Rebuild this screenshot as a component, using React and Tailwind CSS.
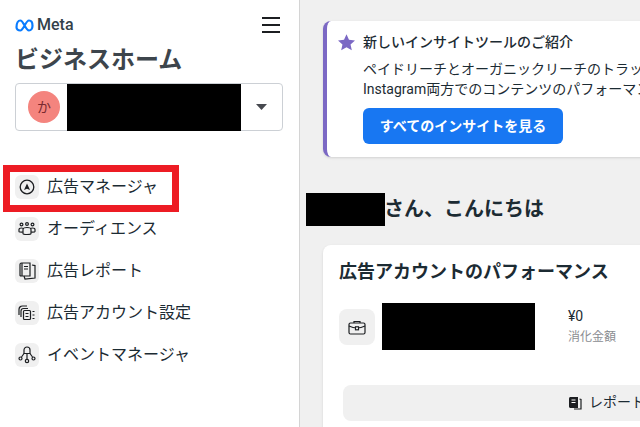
import React from 'react'

function MetaLogo() {
    return (
        <svg width="19" height="13" viewBox="0 0 19 13" fill="none">
            <path d="M1.500 8.300C1.500 4.300 3.200 1.500 5.300 1.500c3.200 0 5.200 10 8.700 10 2 0 3.500-2 3.500-4.800 0-3-1.400-5.200-3.500-5.200-3.400 0-5.400 10-8.800 10-2.100 0-3.700-1.200-3.700-3.200z" stroke="#0a7cff" strokeWidth="2.200" strokeLinejoin="round" />
        </svg>
    )
}

function AdsIcon() {
    return (
        <svg width="16" height="16" viewBox="0 0 16 16" fill="none" stroke="#1c1e21">
            <circle cx="8" cy="8" r="6.800" strokeWidth="1.300" />
            <path d="M8 4.500L11 11L8 9.800L5 11z" fill="#1c1e21" stroke="none" />
        </svg>
    )
}

function AudienceIcon() {
    return (
        <svg width="18" height="14" viewBox="0 0 18 14" fill="none" stroke="#1c1e21" strokeWidth="1.200">
            <circle cx="3.500" cy="2.500" r="1.400" />
            <circle cx="9" cy="2" r="1.400" />
            <circle cx="14.500" cy="2.500" r="1.400" />
            <path d="M1 9.500V7.500C1 6.600 2 6 3.500 6S6 6.600 6 7.500v2c0 .8-5 .8-5 0z" />
            <path d="M12 9.500v-2c0-.9 1-1.500 2.500-1.500s2.500.6 2.500 1.500v2c0 .8-5 .8-5 0z" />
            <path d="M5 11.500V7.500C5 6 7 5.500 9 5.500s4 .5 4 2v4c0 1.300-8 1.300-8 0z" fill="#f0f0f0" />
        </svg>
    )
}

function ReportIcon() {
    return (
        <svg width="17" height="18" viewBox="0 0 17 18" fill="none" stroke="#1c1e21" strokeWidth="1.200">
            <path d="M1 13.500V2.500C1 1.700 1.500 1 2.500 1H11v13H2.500C1.600 14 1 13.800 1 13.500z" />
            <path d="M3 1v13" />
            <path d="M5 4.500h4M5 7h4" />
            <path d="M13 3l3 .6V16L6 17l-1-3" />
        </svg>
    )
}

function SettingsIcon() {
    return (
        <svg width="18" height="16" viewBox="0 0 18 16" fill="none" stroke="#1c1e21" strokeWidth="1.200">
            <path d="M1 10V4.500C1 2.500 2.500 1 4.500 1H9" />
            <path d="M3 12V6c0-1.500 1-2.500 2.500-2.500H10" />
            <rect x="5.500" y="5.500" width="7" height="9" rx="1" />
            <path d="M7.500 8.500h3M7.500 11.500h3" />
            <path d="M14.500 6.500h2M14.500 10h2M14.500 13.500h2" />
        </svg>
    )
}

function EventIcon() {
    return (
        <svg width="18" height="18" viewBox="0 0 18 18" fill="none" stroke="#1c1e21" strokeWidth="1.200">
            <path d="M6 7.500V4a3 3 0 0 1 6 0v3.500z" />
            <path d="M6 7.500L3.500 11M12 7.500l2.500 3.500M9 7.500V13" />
            <circle cx="2.500" cy="12.500" r="1.500" />
            <circle cx="15.500" cy="12.500" r="1.500" />
            <circle cx="9" cy="15" r="1.700" />
        </svg>
    )
}

function MenuItem({ icon, label }) {
    return (
        <div className="flex items-center gap-2 h-6">
            <div className="w-6 h-6 rounded-md bg-[#f0f0f0] flex items-center justify-center">{icon}</div>
            <span className="text-[16px] text-[#1c2b33]">{label}</span>
        </div>
    )
}

export default function App() {
    return (
        <div className="flex w-[640px] h-[427px] overflow-hidden bg-[#f0f0f0] font-['Roboto','Noto_Sans_CJK_JP',sans-serif]">
            {/* sidebar */}
            <div className="relative w-[300px] shrink-0 bg-white border-r border-[#d4d4d4] px-[15px]">
                <div className="flex items-center justify-between h-[24px] mt-[13px] pr-[4px]">
                    <div className="flex items-center gap-[3px]">
                        <MetaLogo />
                        <span className="text-[16px] font-medium text-[#33414a]">Meta</span>
                    </div>
                    <div className="flex flex-col gap-[5px] w-[18px]">
                        <div className="h-[2px] bg-[#1c1e21]"></div>
                        <div className="h-[2px] bg-[#1c1e21]"></div>
                        <div className="h-[2px] bg-[#1c1e21]"></div>
                    </div>
                </div>
                <h1 className="text-[24px] leading-[34px] font-bold text-[#3d454c] mt-[6px]">ビジネスホーム</h1>
                <div className="flex items-center h-[48px] w-[268px] mt-[6px] border border-[#ccd0d5] rounded-[4px] pl-[12px]">
                    <div className="w-8 h-8 rounded-full bg-[#f4847e] flex items-center justify-center text-[14px] text-[#7a2a30]">か</div>
                    <div className="w-[174px] h-[47px] bg-black ml-[7px]"></div>
                    <svg className="ml-[15px]" width="11" height="6" viewBox="0 0 11 6">
                        <path d="M0 0H11L5.500 6z" fill="#47494f" />
                    </svg>
                </div>
                <div className="flex flex-col gap-[18px] mt-[44px]">
                    <MenuItem icon={<AdsIcon />} label="広告マネージャ" />
                    <MenuItem icon={<AudienceIcon />} label="オーディエンス" />
                    <MenuItem icon={<ReportIcon />} label="広告レポート" />
                    <MenuItem icon={<SettingsIcon />} label="広告アカウント設定" />
                    <MenuItem icon={<EventIcon />} label="イベントマネージャ" />
                </div>
                {/* red highlight around the first item */}
                <div className="absolute left-[3px] top-[165px] w-[176px] h-[47px] border-[7px] border-[#ed1c24]"></div>
            </div>

            {/* main */}
            <div className="flex-1 min-w-0 pl-[23px] pt-[21px]">
                <div className="w-[500px] h-[136px] bg-white rounded-lg border-l-4 border-[#7b68c4] shadow-sm pl-[11px] pt-[11px] flex gap-2">
                    <svg className="mt-[2px] shrink-0" width="17" height="17" viewBox="0 0 24 24">
                        <path d="M12 .5l3.500 7.700 8.500.9-6.300 5.700 1.800 8.300-7.500-4.300-7.500 4.300 1.800-8.300L0 9.100l8.500-.9z" fill="#7b68c4" />
                    </svg>
                    <div>
                        <div className="text-[14px] leading-[20px] font-medium text-[#1c2b33] whitespace-nowrap">新しいインサイトツールのご紹介</div>
                        <div className="text-[14px] leading-[20px] text-[#1c2b33] whitespace-nowrap mt-[7px]">ペイドリーチとオーガニックリーチのトラッキングが可能です。Facebookと</div>
                        <div className="text-[14px] leading-[20px] text-[#1c2b33] whitespace-nowrap">Instagram両方でのコンテンツのパフォーマンスを確認</div>
                        <div className="w-[200px] h-[36px] bg-[#1877f2] rounded-md flex items-center justify-center text-[14px] font-bold text-white mt-[9px]">すべてのインサイトを見る</div>
                    </div>
                </div>

                <div className="flex items-center h-[33px] mt-[36px] -ml-[17px]">
                    <div className="w-[79px] h-[33px] bg-black"></div>
                    <span className="text-[20px] font-bold text-[#1c2b33] whitespace-nowrap -ml-[1px] -mt-[1px]">さん、こんにちは</span>
                </div>

                <div className="w-[500px] h-[300px] bg-white rounded-lg shadow-sm mt-[19px] pl-[16px] pt-[14px]">
                    <div className="text-[18px] leading-[26px] font-bold text-[#1c2b33] whitespace-nowrap">広告アカウントのパフォーマンス</div>
                    <div className="flex mt-[18px]">
                        <div className="w-9 h-9 mt-[6px] rounded-lg bg-[#f0f0f0] flex items-center justify-center">
                            <svg width="18" height="15" viewBox="0 0 18 15" fill="none" stroke="#1c1e21" strokeWidth="1.200">
                                <rect x="1" y="3" width="16" height="11" rx="1.500" />
                                <path d="M1 6c5 2.500 11 2.500 16 0" />
                                <path d="M6 3V1.500h6V3" />
                                <rect x="7.500" y="6.800" width="3" height="3" fill="white" />
                            </svg>
                        </div>
                        <div className="w-[153px] h-[47px] bg-black ml-[7px]"></div>
                        <div className="ml-[33px] mt-[3px]">
                            <div className="text-[14px] leading-[20px] text-[#1c2b33]">¥0</div>
                            <div className="text-[12px] leading-[18px] mt-[2px] text-[#8a8d91] whitespace-nowrap">消化金額</div>
                        </div>
                    </div>
                    <div className="w-[450px] h-[36px] ml-[4px] mt-[35px] rounded-lg bg-[#f0f0f0] flex items-center pl-[225px] gap-[7px]">
                        <svg width="14" height="14" viewBox="0 0 14 14">
                            <path d="M1 2.500C1 1.700 1.700 1 2.500 1H10v11H2.500C1.700 12 1 11.300 1 10.500z" fill="#1c1e21" />
                            <path d="M3.500 4h4M3.500 6.500h4" stroke="white" strokeWidth="1" />
                            <path d="M11.500 3l1.500.5V13H6" fill="none" stroke="#1c1e21" strokeWidth="1.200" />
                        </svg>
                        <span className="text-[14px] text-[#1c2b33] whitespace-nowrap -mt-[2px]">レポートを見る</span>
                    </div>
                </div>
            </div>
        </div>
    )
}
